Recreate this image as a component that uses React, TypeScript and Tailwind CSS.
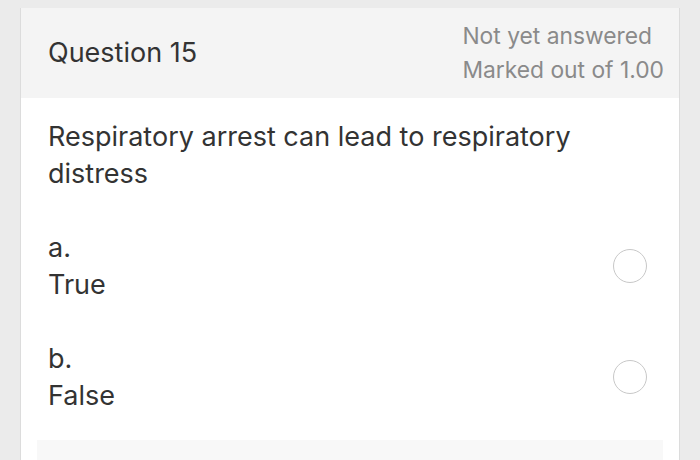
export default function App() {
  return (
    <div className="h-[460px] w-[700px] overflow-hidden bg-[#ebebeb] pl-[20px] pr-[20px] pt-[8px] font-['Inter','Liberation_Sans',sans-serif]">
      <div className="h-[470px] w-[660px] border-x border-[#dcdcdc] bg-white">
        <div className="flex h-[90px] items-center justify-between bg-[#f4f4f4] pl-[27px] pr-[15px]">
          <div className="text-[27px] text-[#333333]">Question 15</div>
          <div className="text-[22.8px] leading-[34px] text-[#8a8a8a]">
            <div>Not yet answered</div>
            <div>Marked out of 1.00</div>
          </div>
        </div>
        <div className="px-[27px] pt-[20px]">
          <p className="text-[27px] leading-[37px] text-[#333333]">
            Respiratory arrest can lead to respiratory distress
          </p>
          <div className="mt-[37px] flex flex-col gap-[37px]">
            {[
              ['a.', 'True'],
              ['b.', 'False'],
            ].map(([letter, label]) => (
              <div key={letter} className="flex items-center justify-between pr-[5px]">
                <div className="text-[27px] leading-[37px] text-[#333333]">
                  <div>{letter}</div>
                  <div>{label}</div>
                </div>
                <div className="h-[34px] w-[34px] rounded-full border-[1.5px] border-[#c8c8c8]" />
              </div>
            ))}
          </div>
        </div>
        <div className="mx-[16px] mt-[26px] h-[40px] bg-[#f8f8f8]" />
      </div>
    </div>
  )
}
